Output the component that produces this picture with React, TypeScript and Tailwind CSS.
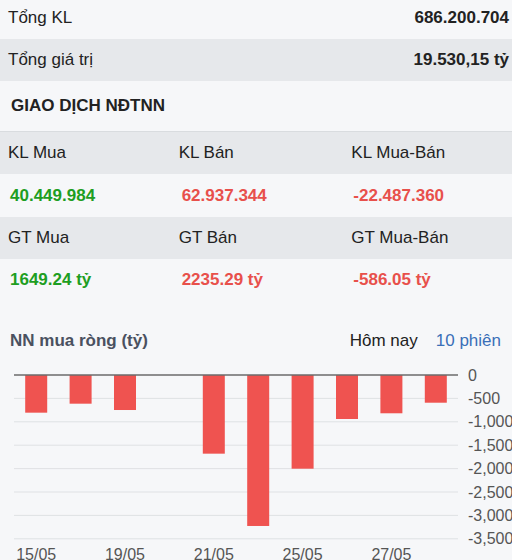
const bars = [-805, -613, -748, 0, -1681, -3226, -2002, -940, -818, -592];
const xLabels: { slot: number; text: string }[] = [
  { slot: 0, text: '15/05' },
  { slot: 2, text: '19/05' },
  { slot: 4, text: '21/05' },
  { slot: 6, text: '25/05' },
  { slot: 8, text: '27/05' },
];
const ticks = [0, -500, -1000, -1500, -2000, -2500, -3000, -3500];

const ZERO = 14;
const STEP = 23.4 / 500;
const LEFT = 14;
const RIGHT = 458;
const SLOT = (RIGHT - LEFT) / 10;

function fmt(v: number) {
  return v.toLocaleString('en-US');
}

function NetChart() {
  return (
    <svg width={512} height={200} className="block">
      {ticks.slice(1).map((t) => (
        <line
          key={t}
          x1={LEFT}
          x2={RIGHT}
          y1={ZERO - t * STEP}
          y2={ZERO - t * STEP}
          stroke="#dfe1e4"
          strokeWidth={1}
        />
      ))}
      {bars.map((v, i) =>
        v === 0 ? null : (
          <rect
            key={i}
            x={LEFT + i * SLOT + 11.2}
            y={ZERO}
            width={22}
            height={-v * STEP}
            fill="#ef5350"
          />
        )
      )}
      <line x1={LEFT} x2={RIGHT} y1={ZERO} y2={ZERO} stroke="#6b6b6b" strokeWidth={1.5} />
      {ticks.map((t) => (
        <text
          key={t}
          x={468}
          y={ZERO - t * STEP}
          dominantBaseline="central"
          fontSize={16}
          fill="#555"
        >
          {fmt(t)}
        </text>
      ))}
      {xLabels.map((l) => (
        <text
          key={l.text}
          x={LEFT + (l.slot + 0.5) * SLOT}
          y={193}
          textAnchor="middle"
          dominantBaseline="central"
          fontSize={16}
          fill="#555"
        >
          {l.text}
        </text>
      ))}
    </svg>
  );
}

export default function App() {
  return (
    <div
      className="w-[512px] h-[560px] overflow-hidden bg-[#f6f7f9] text-[17px] text-[#222]"
      style={{ fontFamily: '"Liberation Sans", Arial, sans-serif' }}
    >
      {/* Totals */}
      <div className="h-[42px] -mt-[3px] flex items-center justify-between pl-[8px] pr-[3px]">
        <span>Tổng KL</span>
        <span className="font-bold">686.200.704</span>
      </div>
      <div className="h-[42px] flex items-center justify-between pl-[8px] pr-[3px] bg-[#e6e8eb]">
        <span>Tổng giá trị</span>
        <span className="font-bold">19.530,15 tỷ</span>
      </div>

      <div className="h-[50px] flex items-center pl-[11px] font-bold">GIAO DỊCH NĐTNN</div>

      {/* Foreign trading grid */}
      <div className="border-t border-[#d9dcdf]">
        <div className="grid grid-cols-3 h-[42px] items-center bg-[#e6e8eb]">
          <span className="pl-[8px]">KL Mua</span>
          <span className="pl-[8px]">KL Bán</span>
          <span className="pl-[10px]">KL Mua-Bán</span>
        </div>
        <div className="grid grid-cols-3 h-[43px] items-center font-bold">
          <span className="pl-[10px] text-[#1e9e22]">40.449.984</span>
          <span className="pl-[11px] text-[#e8504b]">62.937.344</span>
          <span className="pl-[12px] text-[#e8504b]">-22.487.360</span>
        </div>
        <div className="grid grid-cols-3 h-[42px] items-center bg-[#e6e8eb]">
          <span className="pl-[8px]">GT Mua</span>
          <span className="pl-[8px]">GT Bán</span>
          <span className="pl-[10px]">GT Mua-Bán</span>
        </div>
        <div className="grid grid-cols-3 h-[42px] items-center font-bold">
          <span className="pl-[10px] text-[#1e9e22]">1649.24 tỷ</span>
          <span className="pl-[11px] text-[#e8504b]">2235.29 tỷ</span>
          <span className="pl-[12px] text-[#e8504b]">-586.05 tỷ</span>
        </div>
      </div>

      {/* Chart */}
      <div className="h-[60px] flex items-end justify-between pl-[10px] pr-[11px] pb-[8px]">
        <span className="font-bold text-[#4a5160]">NN mua ròng (tỷ)</span>
        <div className="flex gap-[18px]">
          <span className="text-[#222]">Hôm nay</span>
          <span className="text-[#3a6fb8]">10 phiên</span>
        </div>
      </div>
      <NetChart />
    </div>
  );
}
